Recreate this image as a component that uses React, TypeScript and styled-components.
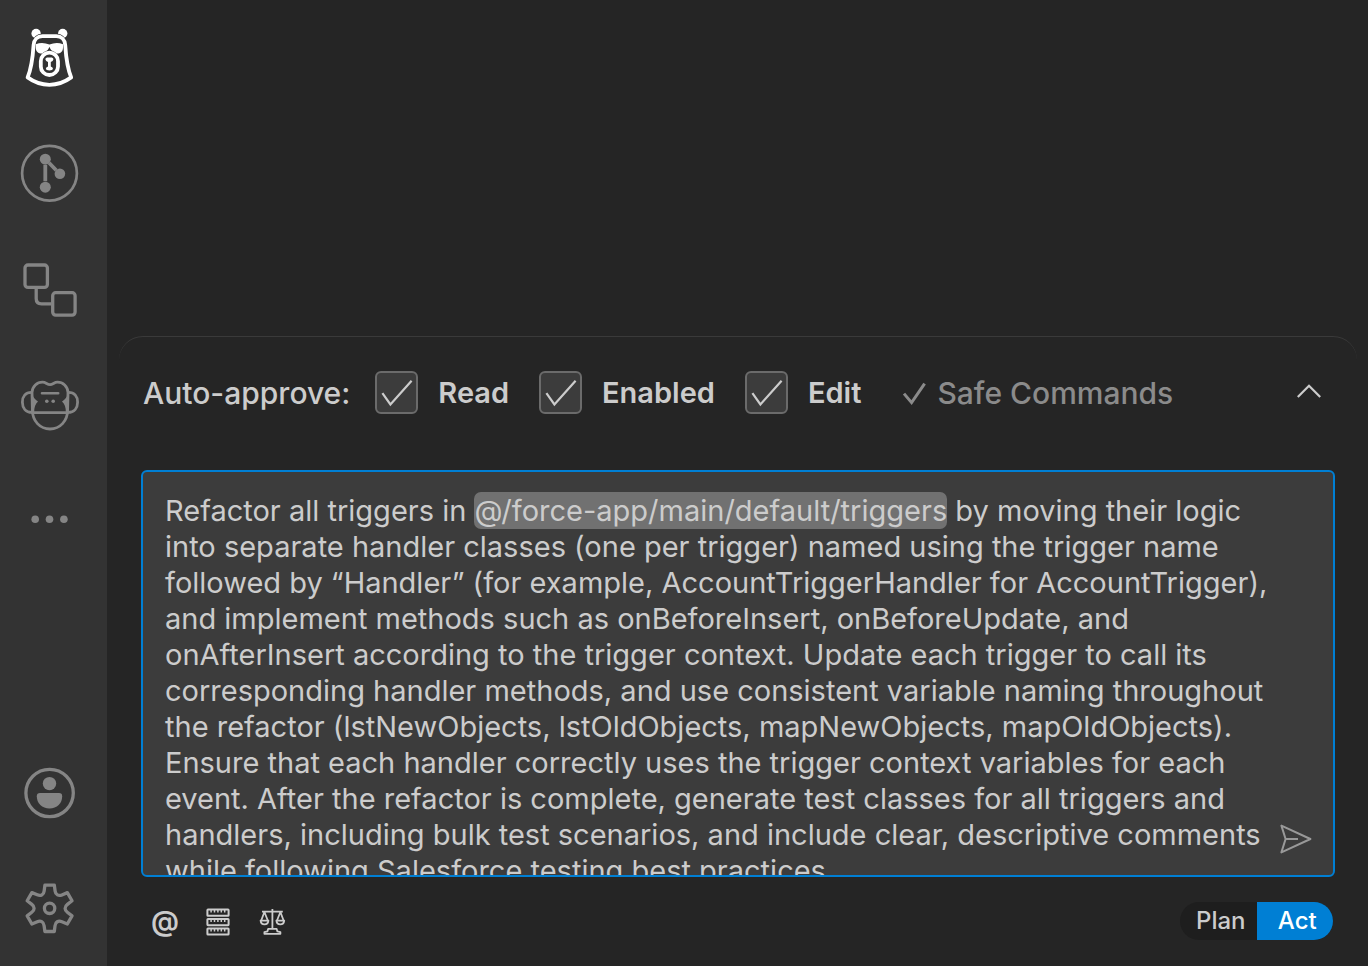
import React, { useState } from "react";
import styled, { createGlobalStyle } from "styled-components";

const GlobalStyle = createGlobalStyle`
  *, *::before, *::after { box-sizing: border-box; }
  body {
    margin: 0;
    background: #252525;
    color: #cccccc;
    font-family: Inter, "Liberation Sans", sans-serif;
  }
  button, textarea, input { font: inherit; color: inherit; }
`;

const Shell = styled.div`
  display: flex;
  min-height: 100vh;
`;

const ActivityBar = styled.nav`
  flex: none;
  width: 107px;
  padding-right: 7px;
  background: #333333;
  display: flex;
  flex-direction: column;
  justify-content: space-between;
`;

const ActivityGroup = styled.div`
  display: flex;
  flex-direction: column;
`;

const ActivityButton = styled.button<{ $active?: boolean }>`
  height: 116px;
  padding: 0;
  border: 0;
  background: none;
  display: grid;
  place-items: center;
  color: ${(p) => (p.$active ? "#ffffff" : "#858585")};
  cursor: pointer;
`;

const ActivityIcon = styled.svg.attrs({ viewBox: "0 0 64 64", "aria-hidden": true })`
  width: 64px;
  height: 64px;
  fill: none;
  stroke: currentColor;
  stroke-width: 3.3;
`;

const Main = styled.main`
  flex: 1;
  min-width: 0;
  padding: 0 11px 0 12px;
  display: flex;
  flex-direction: column;
  justify-content: flex-end;
`;

const Panel = styled.section`
  padding: 34px 22px 26px;
  border-top: 1px solid #3a3a3a;
  border-radius: 24px 24px 0 0;
`;

const ApproveBar = styled.div`
  display: flex;
  align-items: center;
  height: 44px;
  padding: 0 12px 0 2px;
  font-size: 30px;
  font-weight: 500;
  line-height: 36px;
  white-space: nowrap;
`;

const ApproveOptions = styled.div`
  display: flex;
  align-self: flex-start;
  gap: 30px;
  margin-left: 25px;
`;

const Option = styled.label`
  display: flex;
  align-items: center;
  gap: 20px;
  font-size: 29px;
  font-weight: 600;
  cursor: pointer;
`;

const CheckFrame = styled.span`
  display: grid;
  width: 43px;
  height: 43px;
  & > * { grid-area: 1 / 1; }
`;

const CheckInput = styled.input`
  appearance: none;
  width: 43px;
  height: 43px;
  margin: 0;
  border: 2px solid #6b6b6b;
  border-radius: 6px;
  background: #3c3c3c;
  & + svg { visibility: hidden; }
  &:checked + svg { visibility: visible; }
`;

const LineIcon = styled.svg<{ $size: number; $stroke?: number }>`
  display: block;
  width: ${(p) => p.$size}px;
  height: ${(p) => p.$size}px;
  fill: none;
  stroke: currentColor;
  stroke-width: ${(p) => p.$stroke ?? 2};
  pointer-events: none;
`;

const SafeCommands = styled.span`
  display: flex;
  align-items: center;
  gap: 8px;
  margin-left: 40px;
  color: #8b8b8b;
`;

const IconButton = styled.button`
  padding: 0;
  border: 0;
  background: none;
  display: grid;
  place-items: center;
  cursor: pointer;
`;

const CollapseButton = styled(IconButton)`
  margin-left: auto;
  width: 28px;
  height: 28px;
`;

const Composer = styled.div`
  position: relative;
  height: 407px;
  margin-top: 55px;
  border: 2px solid #007fd4;
  border-radius: 6px;
  background: #3c3c3c;
  overflow: hidden;
  font-size: 29px;
  line-height: 36px;
`;

const HighlightLayer = styled.div`
  position: absolute;
  inset: 0;
  padding: 21px 64px 0 22px;
  color: transparent;
  white-space: pre-wrap;
  overflow-wrap: break-word;
`;

const Plain = styled.span`
  &::before { content: attr(data-text); }
`;

const Mention = styled(Plain)`
  padding: 1px 0;
  background: #717171;
  border-radius: 7px;
`;

const Prompt = styled.textarea`
  position: relative;
  display: block;
  width: 100%;
  height: 100%;
  margin: 0;
  padding: 21px 64px 0 22px;
  border: 0;
  outline: 0;
  resize: none;
  background: transparent;
  color: #cccccc;
  overflow-y: auto;
  scrollbar-width: none;
`;

const SendButton = styled(IconButton)`
  position: absolute;
  right: 19px;
  bottom: 18px;
  width: 36px;
  height: 36px;
  color: #999999;
`;

const Footer = styled.div`
  display: flex;
  align-items: center;
  justify-content: space-between;
  height: 38px;
  margin-top: 25px;
  padding: 0 2px 0 8px;
`;

const Tools = styled.div`
  display: flex;
  gap: 22px;
`;

const ToolButton = styled(IconButton)`
  width: 32px;
  height: 32px;
  font-size: 28px;
  line-height: 30px;
  font-weight: 600;
`;

const ModeSwitch = styled.div`
  display: flex;
  width: 153px;
  height: 38px;
  border-radius: 19px;
  background: #1e1e1e;
  overflow: hidden;
`;

const ModeButton = styled.button<{ $on: boolean }>`
  flex: 1;
  padding: 0 0 0 5px;
  border: 0;
  background: ${(p) => (p.$on ? "#007fd4" : "transparent")};
  color: ${(p) => (p.$on ? "#ffffff" : "#cccccc")};
  font-size: 24px;
  font-weight: 500;
  line-height: 36px;
  cursor: pointer;
`;

const BearIcon = () => (
  <ActivityIcon>
    <g fill="currentColor" stroke="none">
      <circle cx="18.1" cy="7.5" r="4.7" />
      <circle cx="44.7" cy="7.5" r="4.7" />
    </g>
    <path
      stroke="#333333"
      strokeWidth="5.4"
      d="M15.6 19C16.8 14.5 19.5 10.2 24.5 10.2H38.3C43.3 10.2 46 14.5 47.2 19"
    />
    <path
      strokeWidth="3.8"
      strokeLinejoin="round"
      d="M24.5 10.2H38.3C43.3 10.2 46.8 13.5 47.2 19C48 31 49.4 42.5 53.2 51.4C46.5 56.3 39 58.8 31.4 58.8C23.8 58.8 16.3 56.3 9.6 51.4C13.4 42.5 14.8 31 15.6 19C16 13.5 19.5 10.2 24.5 10.2Z"
    />
    <path
      fill="currentColor"
      stroke="none"
      d="M17.8 18.2Q24.5 15.8 31.4 18.6Q38.3 15.8 45 18.2V21.5C45 25.6 42.6 27.6 39 27.6C35.5 27.6 33 25 31.4 20.8C29.8 25 27.3 27.6 23.8 27.6C20.2 27.6 17.8 25.6 17.8 21.5Z"
    />
    <ellipse cx="31.4" cy="37.8" rx="10.8" ry="13.5" fill="#333333" stroke="none" />
    <rect x="22.8" y="26.6" width="17.2" height="22.4" rx="8.6" strokeWidth="3.8" />
    <path
      fill="currentColor"
      stroke="none"
      d="M29 31.4H33.8Q35.6 31.8 35.4 33.6Q35 35.2 32.8 36V40.4Q35 41 35 43Q34.6 44.4 31.4 44.4Q28.2 44.4 27.8 43Q27.8 41 30 40.4V36Q27.8 35.2 27.4 33.6Q27.2 31.8 29 31.4Z"
    />
  </ActivityIcon>
);

const BranchIcon = () => (
  <ActivityIcon>
    <circle cx="31.5" cy="31.2" r="27.4" strokeWidth="2.7" />
    <g fill="currentColor" stroke="none">
      <circle cx="27.3" cy="17.2" r="5.5" />
      <circle cx="41.9" cy="31.8" r="5.3" />
      <circle cx="27.3" cy="45.2" r="5.5" />
    </g>
    <path strokeWidth="3.8" d="M27.3 23V39.3M31 20.8L38.2 28.2" />
  </ActivityIcon>
);

const BlocksIcon = () => (
  <ActivityIcon>
    <rect x="7" y="7" width="22.4" height="22.4" rx="3" />
    <rect x="34.7" y="34.7" width="22.4" height="22.4" rx="3" />
    <path d="M18.2 31V40.5Q18.2 45.8 23.5 45.8H33" />
  </ActivityIcon>
);

const MonkeyIcon = () => (
  <ActivityIcon strokeLinecap="round">
    <g strokeWidth="2.8">
      <path d="M14.4 36C14.4 47 22 55 32 55C42 55 49.6 47 49.6 36L50 18.5C49.6 12 45 8.2 39.5 8.2C36 8.2 35 10.6 32 10.6C29 10.6 28 8.2 24.5 8.2C19 8.2 14.4 12 14 18.5Z" />
      <path d="M13.4 18.4C7.5 18.4 4.4 22.5 4.4 28.3C4.4 34 7.8 38.4 14 38.4M50.6 18.4C56.5 18.4 59.6 22.5 59.6 28.3C59.6 34 56.2 38.4 50 38.4" />
      <path strokeWidth="2.6" d="M14 38.6H50M24 19.2H40.2" />
    </g>
    <g fill="currentColor" stroke="none">
      <path d="M13.5 19Q15 24 20 27.6Q16 31 16.2 38.5H13.5ZM50.5 19Q49 24 44 27.6Q48 31 47.8 38.5H50.5Z" />
      <circle cx="28.8" cy="27.3" r="1.8" />
      <circle cx="35.2" cy="27.3" r="1.8" />
    </g>
  </ActivityIcon>
);

const MoreIcon = () => (
  <ActivityIcon>
    <g fill="currentColor" stroke="none">
      <circle cx="17.2" cy="29.3" r="3.8" />
      <circle cx="31.5" cy="29.3" r="3.8" />
      <circle cx="45.9" cy="29.3" r="3.8" />
    </g>
  </ActivityIcon>
);

const AccountIcon = () => (
  <ActivityIcon>
    <circle cx="31.6" cy="33" r="23.7" />
    <g fill="currentColor" stroke="none">
      <circle cx="31.5" cy="23.6" r="6.7" />
      <path d="M22 33H41Q44.2 33 44.2 36.2C44.2 43.5 39 48.4 31.5 48.4C24 48.4 18.8 43.5 18.8 36.2Q18.8 33 22 33Z" />
    </g>
  </ActivityIcon>
);

// One tooth and the valley after it, turned six times round the hub.
const toothPoints: [number, number][] = [
  [-4.7, -23.2], [4.7, -23.2], [5.5, -17.4], [6, -13.4], [9, -12], [12.3, -13.4],
];

const gearPath = (() => {
  let d = "";
  for (let i = 0; i < 6; i++) {
    const a = (i * Math.PI) / 3;
    const p = toothPoints.map(([x, y]) => {
      const rx = x * Math.cos(a) - y * Math.sin(a) + 31.6;
      const ry = x * Math.sin(a) + y * Math.cos(a) + 32.3;
      return `${rx.toFixed(2)} ${ry.toFixed(2)}`;
    });
    d += `${i ? "L" : "M"}${p[0]}L${p[1]}L${p[2]}C${p[3]} ${p[4]} ${p[5]}`;
  }
  return d + "Z";
})();

const GearIcon = () => (
  <ActivityIcon strokeLinejoin="round">
    <path d={gearPath} />
    <circle cx="31.6" cy="32.3" r="5.2" />
  </ActivityIcon>
);

const ServerIcon = () => (
  <LineIcon $size={32} $stroke={2} viewBox="0 0 32 32" aria-hidden>
    {[4.6, 14, 23.4].map((y) => (
      <g key={y}>
        <rect x="4.4" y={y} width="21.2" height="6.2" rx="0.6" />
        <path d={`M8.1 ${y}v3M11.5 ${y}v3M14.9 ${y}v3M18.3 ${y}v3M21.7 ${y}v3`} strokeWidth="1.5" />
      </g>
    ))}
  </LineIcon>
);

const ScaleIcon = () => (
  <LineIcon $size={32} $stroke={1.8} viewBox="0 0 32 32" strokeLinejoin="round" aria-hidden>
    <path d="M15.4 4V23.6M5 6.6H25.8M7.4 7L4.2 15.5M7.4 7L10.8 15.5M23.4 7L20 15.5M23.4 7L26.6 15.5" />
    <path d="M3.6 15.6H11.4Q11 19.4 7.5 19.4Q4 19.4 3.6 15.6ZM19.4 15.6H27.2Q26.8 19.4 23.3 19.4Q19.8 19.4 19.4 15.6Z" />
    <path d="M11.2 23.8H19.6L20.4 26.4L23.4 27.2V28.8H7.4V27.2L10.4 26.4Z" />
  </LineIcon>
);

const MENTION = "@/force-app/main/default/triggers";
const INITIAL_PROMPT =
  `Refactor all triggers in ${MENTION} by moving their logic into separate handler classes (one per trigger) named using the trigger name followed by “Handler” (for example, AccountTriggerHandler for AccountTrigger), and implement methods such as onBeforeInsert, onBeforeUpdate, and onAfterInsert according to the trigger context. Update each trigger to call its corresponding handler methods, and use consistent variable naming throughout the refactor (lstNewObjects, lstOldObjects, mapNewObjects, mapOldObjects). Ensure that each handler correctly uses the trigger context variables for each event. After the refactor is complete, generate test classes for all triggers and handlers, including bulk test scenarios, and include clear, descriptive comments while following Salesforce testing best practices.`;

const topItems = [
  { label: "Assistant", Icon: BearIcon, active: true },
  { label: "Source graph", Icon: BranchIcon },
  { label: "Blocks", Icon: BlocksIcon },
  { label: "Monkey tools", Icon: MonkeyIcon },
  { label: "More views", Icon: MoreIcon },
];

const bottomItems = [
  { label: "Accounts", Icon: AccountIcon },
  { label: "Manage", Icon: GearIcon },
];

function ApproveOption({ label }: { label: string }) {
  return (
    <Option>
      <CheckFrame>
        <CheckInput type="checkbox" defaultChecked />
        <LineIcon $size={43} $stroke={2.2} viewBox="0 0 43 43" aria-hidden>
          <path d="M7.4 22.2L15.4 33.4L36.6 9.8" />
        </LineIcon>
      </CheckFrame>
      {label}
    </Option>
  );
}

export default function App() {
  const [mode, setMode] = useState("Act");
  const [prompt, setPrompt] = useState(INITIAL_PROMPT);
  const parts = prompt.split(MENTION);

  return (
    <>
      <GlobalStyle />
      <Shell>
        <ActivityBar aria-label="Views">
          <ActivityGroup>
            {topItems.map(({ label, Icon, active }) => (
              <ActivityButton key={label} type="button" aria-label={label} $active={active}>
                <Icon />
              </ActivityButton>
            ))}
          </ActivityGroup>
          <ActivityGroup>
            {bottomItems.map(({ label, Icon }) => (
              <ActivityButton key={label} type="button" aria-label={label}>
                <Icon />
              </ActivityButton>
            ))}
          </ActivityGroup>
        </ActivityBar>
        <Main>
          <Panel>
            <ApproveBar>
              <span>Auto-approve:</span>
              <ApproveOptions>
                <ApproveOption label="Read" />
                <ApproveOption label="Enabled" />
                <ApproveOption label="Edit" />
              </ApproveOptions>
              <SafeCommands>
                <LineIcon $size={28} $stroke={3} viewBox="0 0 28 28" aria-hidden>
                  <path d="M3 14.6L10.6 23.6L23.6 4.6" />
                </LineIcon>
                Safe Commands
              </SafeCommands>
              <CollapseButton type="button" aria-label="Collapse">
                <LineIcon $size={28} $stroke={2.2} viewBox="0 0 28 28" aria-hidden>
                  <path d="M2.8 18L14 6.8L25.2 18" />
                </LineIcon>
              </CollapseButton>
            </ApproveBar>
            <Composer>
              <HighlightLayer aria-hidden>
                {parts.map((part, i) => (
                  <React.Fragment key={i}>
                    {i > 0 && <Mention data-text={MENTION} />}
                    <Plain data-text={part} />
                  </React.Fragment>
                ))}
              </HighlightLayer>
              <Prompt
                aria-label="Task"
                spellCheck={false}
                value={prompt}
                onChange={(e) => setPrompt(e.target.value)}
              />
              <SendButton type="button" aria-label="Send">
                <LineIcon $size={36} viewBox="0 0 36 36" strokeLinejoin="round" aria-hidden>
                  <path d="M3.4 4.6L32.4 18L3.4 31.4L7.6 18ZM7.6 18H20" />
                </LineIcon>
              </SendButton>
            </Composer>
            <Footer>
              <Tools>
                <ToolButton type="button" aria-label="Add context">@</ToolButton>
                <ToolButton type="button" aria-label="Manage servers"><ServerIcon /></ToolButton>
                <ToolButton type="button" aria-label="Manage rules"><ScaleIcon /></ToolButton>
              </Tools>
              <ModeSwitch role="group" aria-label="Mode">
                {["Plan", "Act"].map((m) => (
                  <ModeButton key={m} type="button" $on={m === mode} aria-pressed={m === mode} onClick={() => setMode(m)}>
                    {m}
                  </ModeButton>
                ))}
              </ModeSwitch>
            </Footer>
          </Panel>
        </Main>
      </Shell>
    </>
  );
}
